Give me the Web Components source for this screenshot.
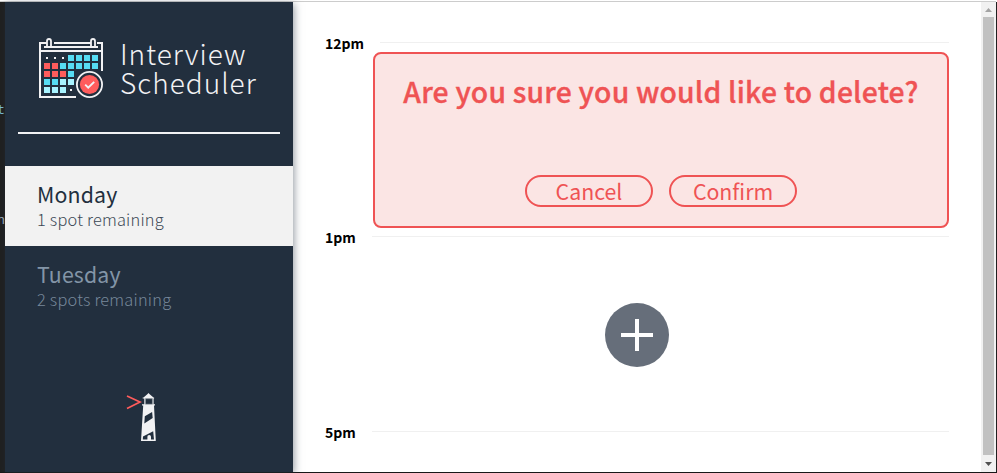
<!DOCTYPE html>
<html lang="en"><head><meta charset="utf-8"><title>Interview Scheduler</title>
<style>html,body{margin:0;height:100%;overflow:hidden}body{font-family:"Noto Sans CJK SC","Noto Sans",sans-serif}</style></head><body>
<scheduler-app></scheduler-app>
<script>
const define=(name,html,setup)=>customElements.define(name,class extends HTMLElement{
  connectedCallback(){
    if(this.shadowRoot)return;
    const t=document.createElement('template');t.innerHTML=html;
    this.attachShadow({mode:'open'}).append(t.content.cloneNode(true));
    if(setup)setup(this);
  }
});

define('calendar-logo',`<style>:host{display:block;width:64px;height:60px}svg{display:block}</style>
<svg width="64" height="60" viewBox="39 38 64 60"><g fill="none" stroke="#f2f2f4" stroke-width="2">
<path d="M47 43H40V97H76M54 43H91M97 43H102V71M44 47H98M39 51H103"/>
<path d="M47 46V41Q47 39 49 39T51 41V46M91 46V41Q91 39 93 39T95 41V46" stroke-width="1.8"/></g>
<g id="cells"></g><g fill="#f2f2f4"><path d="M46 57h2v2h-2zM54 57h2v2h-2zM62 57h2v2h-2zM70 89h2v2h-2z"/></g>
<circle cx="89.5" cy="84.5" r="12.6" fill="#222f3e" stroke="#f2f2f4" stroke-width="1.8"/><circle cx="89.5" cy="84.5" r="9.6" fill="#ff5c5c"/>
<path d="M85.2 84.7l3 3 6-5.8" fill="none" stroke="#f2f2f4" stroke-width="1.9"/></svg>`,el=>{
  const rows=['...bbbb','rrbbbbb','rrrb','bbll','lll'],c={b:'#56dcf3',r:'#ff5c5c',l:'#a8f3ff'};
  el.shadowRoot.getElementById('cells').innerHTML=rows.map((r,y)=>[...r].map((k,x)=>c[k]?`<rect x="${44+x*8}" y="${55+y*8}" width="6" height="6" fill="${c[k]}"/>`:'').join('')).join('');
});

define('lighthouse-logo',`<style>:host{display:block;width:30px;height:49px}svg{display:block}</style>
<svg width="30" height="49" viewBox="126 393 30 49"><path d="M127 396L140 402L127 408.5" fill="none" stroke="#ff5c5c" stroke-width="1.7"/>
<g fill="#f2f2f4"><path d="M148.5 393l1.2 1.3 3.8 3.2h.6v1h-11.4v-1h.8l3.8-3.2zM142 404.2h13v1.3h-1l1.8 35.5h-14.8l2.2-35.5h-1.2z"/><path d="M144.3 398h1.1v7h-1.1zM152.5 398h1.1v7h-1.1z"/></g>
<path d="M145.4 398.7h7v5.5h-7z" fill="none" stroke="#a1a8ae" stroke-width=".5"/>
<path d="M144.8 416.2l7.3-4.1.6 6-8.4 5.5zM143 436.5l10.2-5.3.8 8.3h-3v-2.8a1.8 1.8 0 0 0-3.6 0v2.8H142.8z" fill="#222f3e"/></svg>`);

define('side-bar',`<style>:host{display:flex;flex-direction:column;align-items:center;width:288px;background:#222f3e;box-shadow:1px 2px 8px rgba(34,47,62,.5);z-index:1;flex:none}
.brand{display:flex;box-sizing:border-box;width:262px;height:132px;padding:36px 0 0 21px;border-bottom:2px solid #f2f2f4}
h1{margin:0 0 0 17px;padding-top:1px;font-size:28px;line-height:29px;font-weight:200;letter-spacing:1px;color:#f2f2f4;white-space:nowrap}
h1 span{display:block}nav{width:100%;margin-top:32px}lighthouse-logo{margin:auto 0 30px;transform:translateX(-8px)}</style>
<div class="brand"><calendar-logo></calendar-logo><h1><span>Interview</span><span>Scheduler</span></h1></div>
<nav><slot></slot></nav><lighthouse-logo></lighthouse-logo>`);

define('day-item',`<style>:host{display:block;box-sizing:border-box;height:80px;padding:15px 32px;color:#8395a7;white-space:nowrap}
:host([selected]){background:#f2f2f2;color:#222f3e}
h2{margin:0;font-size:21.3px;line-height:26px;font-weight:400;letter-spacing:.15px}p{margin:0;font-size:16.4px;letter-spacing:.2px;line-height:24px;font-weight:300;opacity:.88}</style>
<h2><slot name="day"></slot></h2><p><slot></slot></p>`);

define('time-row',`<style>:host{display:block}header{display:flex;height:24px;gap:var(--gap,16px)}
h4{margin:0;font-size:14px;line-height:22px;font-weight:700;color:#000;flex:none;width:var(--label,31px);white-space:nowrap}
hr{flex:1;height:1px;margin:10px 0 0;border:0;background:#f0f0f0}</style>
<header><h4><slot name="time"></slot></h4><hr></header><slot></slot>`);

define('confirm-card',`<style>:host{display:flex;flex-direction:column;align-items:center;box-sizing:border-box;width:576px;height:176px;margin:-4px 0 -2px 48px;padding:19px 0 19px;border:2px solid #ef5354;border-radius:8px;background:#fbe5e4;color:#ef5354}
h3{margin:0;font-size:28.3px;line-height:36px;font-weight:500;letter-spacing:.21px;-webkit-text-stroke:.35px #ef5354;white-space:nowrap}
.actions{display:flex;gap:16px;margin-top:auto}</style><h3><slot></slot></h3><div class="actions"><slot name="actions"></slot></div>`);

define('pill-button',`<style>:host{display:block}button{display:block;box-sizing:border-box;width:128px;height:32px;padding:0;border:2px solid #ef5354;border-radius:16px;background:none;color:#ef5354;font:400 21.3px/28px "Noto Sans CJK SC","Noto Sans",sans-serif}</style><button><slot></slot></button>`);

define('add-button',`<style>:host{display:flex;justify-content:center;height:171px;padding-top:53px;box-sizing:border-box}</style>
<svg width="64" height="64"><circle cx="32" cy="32" r="32" fill="#666e7a"/><path d="M16 32H48M32 16V48" stroke="#fff" stroke-width="4"/></svg>`);

define('scroll-bar',`<style>:host{display:flex;flex-direction:column;align-items:center;width:15px;flex:none;background:#f1f1f1}
i{flex:1;width:11px;background:#c1c1c1}svg{display:block}.down{transform:rotate(180deg)}</style>
<svg width="15" height="15"><path d="M7.5 6L11 10H4z" fill="#a3a3a3"/></svg><i></i><svg class="down" width="15" height="17"><path d="M7.5 6L11 10H4z" fill="#505050"/></svg>`);

define('scheduler-app',`<style>:host{display:flex;flex-direction:column;height:100vh}
.top{height:1px;background:#fff;border-bottom:1px solid #ccc;margin-right:1px}
.window{display:flex;flex:1;min-height:0}.under{width:5px;background:#202020;overflow:hidden;flex:none;font:13px/16px "Liberation Mono",monospace;color:#a5b8c0;display:flex;flex-direction:column;align-items:flex-end;box-sizing:border-box;padding-top:101px;gap:94px}
.under :first-child{color:#7cc0dc}
main{flex:1;box-sizing:border-box;padding:30px 32px 0;background:#fff;min-width:0;overflow:hidden}
.first{--label:39px;--gap:16px}.edge{width:1px;background:#202020}.bottom{height:1px;background:#181818}</style>
<div class="top"></div><div class="window"><div class="under"><span>t</span><span>n</span></div>
<side-bar><day-item selected><span slot="day">Monday</span>1 spot remaining</day-item><day-item><span slot="day">Tuesday</span>2 spots remaining</day-item></side-bar>
<main><time-row class="first"><span slot="time">12pm</span><confirm-card>Are you sure you would like to delete?<pill-button slot="actions">Cancel</pill-button><pill-button slot="actions">Confirm</pill-button></confirm-card></time-row>
<time-row><span slot="time">1pm</span><add-button></add-button></time-row><time-row><span slot="time">5pm</span></time-row></main>
<scroll-bar></scroll-bar><div class="edge"></div></div><div class="bottom"></div>`);
</script></body></html>
